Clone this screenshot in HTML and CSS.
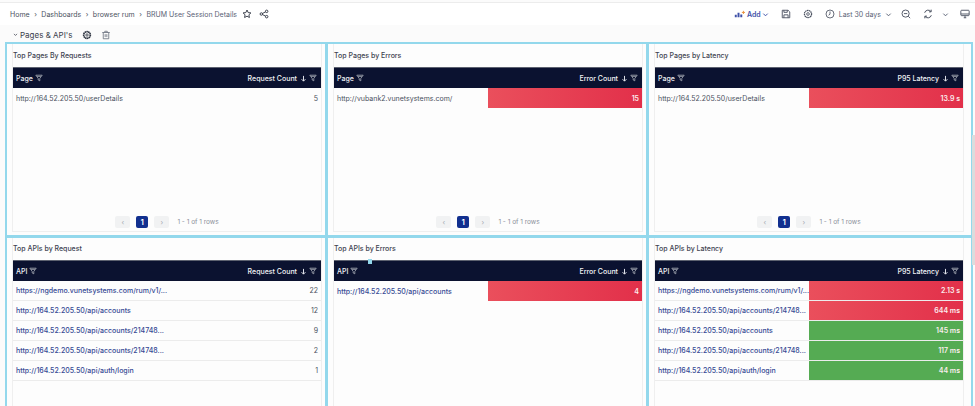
FILE: index.html
```html
<!DOCTYPE html>
<html lang="en">
<head>
<meta charset="utf-8">
<title>BRUM User Session Details</title>
<link rel="stylesheet" href="styles.css">
</head>
<body>
<svg class="defs" width="0" height="0" aria-hidden="true">
  <symbol id="filter" viewBox="0 0 10 10"><path d="M1 1.500h8L6 5.500v3L4 7.500v-2z M2.600 3h4.800" fill="none" stroke="currentColor" stroke-width="1"/></symbol>
  <symbol id="down" viewBox="0 0 8 8"><path d="M4 1v6M1.800 4.800 4 7l2.200-2.200" fill="none" stroke="currentColor" stroke-width="1.100"/></symbol>
  <symbol id="chev" viewBox="0 0 8 8"><path d="M1.500 3 4 5.500 6.500 3" fill="none" stroke="currentColor" stroke-width="1.100"/></symbol>
</svg>
<header class="topbar">
  <nav class="crumbs">
    <span>Home</span><i>›</i><span>Dashboards</span><i>›</i><span>browser rum</span><i>›</i><span class="current">BRUM User Session Details</span>
    <svg class="ico star" viewBox="0 0 12 12"><path d="M6 1.200 7.400 4.300l3.300.4-2.400 2.200.6 3.300L6 8.600 3.100 10.200l.6-3.300L1.300 4.700l3.300-.4z" fill="none" stroke="#2f3542" stroke-width="1.100"/></svg>
    <svg class="ico share" viewBox="0 0 12 12"><g fill="none" stroke="#2f3542" stroke-width="1.100"><circle cx="2.800" cy="6" r="1.500"/><circle cx="9.200" cy="2.800" r="1.500"/><circle cx="9.200" cy="9.200" r="1.500"/><path d="M4.200 5.300 7.800 3.500M4.200 6.700l3.600 1.800"/></g></svg>
  </nav>
  <div class="tools">
    <span class="add">
      <svg class="addico" viewBox="0 0 14 10"><path d="M1 9V6h2.500v3zM4.500 9V3.500H7V9zM8 9V5.500h2.500V9z" fill="#3f51a8"/><path d="M10 3h4M12 1v4" stroke="#e8903a" stroke-width="1.200"/></svg>
      <b>Add</b><svg class="chev blue"><use href="#chev"/></svg>
    </span>
    <svg class="ico save" viewBox="0 0 12 12"><g fill="none" stroke="#4a5160" stroke-width="1.100"><path d="M1.500 1.500h7l2 2v7h-9z"/><path d="M3.500 1.500v2.500h4V1.500M3.500 10.500V7h5v3.500"/></g></svg>
    <svg class="ico gear" viewBox="0 0 12 12"><g fill="none" stroke="#4a5160"><circle cx="6" cy="6" r="4.300" stroke-width="1.500" stroke-dasharray="1.800 .5"/><circle cx="6" cy="6" r="1.600" stroke-width="1"/></g></svg>
    <span class="time">
      <svg class="ico clock" viewBox="0 0 12 12"><g fill="none" stroke="#4a5160" stroke-width="1"><circle cx="6" cy="6" r="4.800"/><path d="M6 3v3.200L4.300 7.500"/></g></svg>
      <span>Last 30 days</span><svg class="chev"><use href="#chev"/></svg>
    </span>
    <svg class="ico zoomout" viewBox="0 0 12 12"><g fill="none" stroke="#4a5160" stroke-width="1.100"><circle cx="5.500" cy="5.500" r="4.300"/><path d="M3.500 5.500h4M8.700 8.700 11 11"/></g></svg>
    <svg class="ico refresh" viewBox="0 0 12 12"><g fill="none" stroke="#4a5160" stroke-width="1.200"><path d="M2 4.500A4.300 4.300 0 0 1 9.500 3M10 7.500A4.300 4.300 0 0 1 2.500 9"/><path d="M9.800 .8v2.600H7.200M2.200 11.200V8.600h2.600"/></g></svg>
    <svg class="chev sole"><use href="#chev"/></svg>
    <svg class="ico monitor" viewBox="0 0 12 12"><g fill="none" stroke="#4a5160" stroke-width="1.100"><rect x="1" y="1.500" width="10" height="6.500" rx="1"/><path d="M1 6h10M4.500 10.500h3M6 8v2.500"/></g></svg>
  </div>
</header>
<div class="rowbar">
  <svg class="chev dark"><use href="#chev"/></svg>
  <span class="rowtitle">Pages &amp; API's</span>
  <svg class="ico rowgear" viewBox="0 0 12 12"><g fill="none" stroke="#2f3542"><circle cx="6" cy="6" r="4" stroke-width="2" stroke-dasharray="1.800 .4"/><circle cx="6" cy="6" r="1.400" stroke-width="1"/></g></svg>
  <svg class="ico trash" viewBox="0 0 12 12"><g fill="none" stroke="#6b7280" stroke-width="1"><path d="M1.500 3h9M4.500 3V1.500h3V3M2.700 3v7.500h6.600V3M5 5v3.500M7 5v3.500"/></g></svg>
</div>
<main class="grid">
  <section class="panel">
    <div class="inner">
      <h2>Top Pages By Requests</h2>
      <div class="thead"><span>Page</span><svg class="filter"><use href="#filter"/></svg><span class="hright">Request Count</span><svg class="sort"><use href="#down"/></svg><svg class="filter"><use href="#filter"/></svg></div>
      <div class="row plain"><span class="cell">http://164.52.205.50/userDetails</span><span class="num">5</span></div>
      <div class="pager"><span class="pg">‹</span><span class="pg on">1</span><span class="pg">›</span><span class="count">1 - 1 of 1 rows</span></div>
    </div>
  </section>
  <section class="panel">
    <div class="inner">
      <h2>Top Pages by Errors</h2>
      <div class="thead"><span>Page</span><svg class="filter"><use href="#filter"/></svg><span class="hright">Error Count</span><svg class="sort"><use href="#down"/></svg><svg class="filter"><use href="#filter"/></svg></div>
      <div class="row plain"><span class="cell">http://vubank2.vunetsystems.com/</span><span class="bar red">15</span></div>
      <div class="pager"><span class="pg">‹</span><span class="pg on">1</span><span class="pg">›</span><span class="count">1 - 1 of 1 rows</span></div>
    </div>
  </section>
  <section class="panel">
    <div class="inner">
      <h2>Top Pages by Latency</h2>
      <div class="thead"><span>Page</span><svg class="filter"><use href="#filter"/></svg><span class="hright">P95 Latency</span><svg class="sort"><use href="#down"/></svg><svg class="filter"><use href="#filter"/></svg></div>
      <div class="row plain"><span class="cell">http://164.52.205.50/userDetails</span><span class="bar red">13.9 s</span></div>
      <div class="pager"><span class="pg">‹</span><span class="pg on">1</span><span class="pg">›</span><span class="count">1 - 1 of 1 rows</span></div>
    </div>
  </section>
  <section class="panel lower">
    <div class="inner">
      <h2>Top APIs by Request</h2>
      <div class="thead"><span>API</span><svg class="filter"><use href="#filter"/></svg><span class="hright">Request Count</span><svg class="sort"><use href="#down"/></svg><svg class="filter"><use href="#filter"/></svg></div>
      <div class="row"><a class="cell">https://ngdemo.vunetsystems.com/rum/v1/...</a><span class="num">22</span></div>
      <div class="row"><a class="cell">http://164.52.205.50/api/accounts</a><span class="num">12</span></div>
      <div class="row"><a class="cell">http://164.52.205.50/api/accounts/214748...</a><span class="num">9</span></div>
      <div class="row"><a class="cell">http://164.52.205.50/api/accounts/214748...</a><span class="num">2</span></div>
      <div class="row"><a class="cell">http://164.52.205.50/api/auth/login</a><span class="num">1</span></div>
    </div>
  </section>
  <section class="panel lower">
    <div class="inner">
      <h2>Top APIs by Errors</h2>
      <div class="thead"><span class="tick"></span><span>API</span><svg class="filter"><use href="#filter"/></svg><span class="hright">Error Count</span><svg class="sort"><use href="#down"/></svg><svg class="filter"><use href="#filter"/></svg></div>
      <div class="row plain"><a class="cell">http://164.52.205.50/api/accounts</a><span class="bar red">4</span></div>
    </div>
  </section>
  <section class="panel lower">
    <div class="inner">
      <h2>Top APIs by Latency</h2>
      <div class="thead"><span>API</span><svg class="filter"><use href="#filter"/></svg><span class="hright">P95 Latency</span><svg class="sort"><use href="#down"/></svg><svg class="filter"><use href="#filter"/></svg></div>
      <div class="row"><a class="cell">https://ngdemo.vunetsystems.com/rum/v1/...</a><span class="bar red">2.13 s</span></div>
      <div class="row"><a class="cell">http://164.52.205.50/api/accounts/214748...</a><span class="bar red">644 ms</span></div>
      <div class="row"><a class="cell">http://164.52.205.50/api/accounts</a><span class="bar green">145 ms</span></div>
      <div class="row"><a class="cell">http://164.52.205.50/api/accounts/214748...</a><span class="bar green">117 ms</span></div>
      <div class="row"><a class="cell">http://164.52.205.50/api/auth/login</a><span class="bar green">44 ms</span></div>
    </div>
  </section>
</main>
<div class="scrollthumb"></div>
</body>
</html>
```

FILE: styles.css
```css
* { box-sizing: border-box; }
html, body { height: 406px; overflow: hidden; }
body {
  margin: 0;
  background: #fbfbfb;
  color: #3d4350;
  font-family: Inter, "Liberation Sans", sans-serif;
  font-size: 7px;
  position: relative;
}
.defs { position: absolute; }
.topbar {
  height: 23px;
  margin-top: 2px;
  border-top: 1px solid #ececec;
  padding: 0 5px 0 10px;
  background: #fff;
  display: flex;
  align-items: center;
  justify-content: space-between;
}
.crumbs { display: flex; align-items: center; color: #4a5160; }
.crumbs i { font-style: normal; margin: 0 4.500px; color: #4a5160; }
.crumbs .current { color: #5a6275; }
.ico { width: 10px; height: 10px; flex: none; }
.star { margin-left: 5px; }
.share { margin-left: 7px; }
.tools { display: flex; align-items: center; color: #5a6275; }
.add { display: flex; align-items: center; color: #3f51a8; }
.add b { font-weight: 600; margin-left: 2px; }
.addico { width: 11px; height: 8px; }
.chev { width: 7px; height: 7px; color: #5a6275; flex: none; }
.chev.blue { color: #3f51a8; margin-left: 1px; }
.chev.dark { color: #2f3542; width: 5px; height: 5px; margin-right: 2px; }
.save { margin-left: 12px; }
.gear { margin-left: 12px; }
.time { display: flex; align-items: center; margin-left: 12px; }
.time span { margin: 0 4px 0 4px; }
.zoomout { margin-left: 9px; }
.refresh { margin-left: 12px; }
.sole { margin-left: 9px; }
.monitor { margin-left: 11px; }
.rowbar {
  height: 17px;
  padding: 2px 0 0 13px;
  display: flex;
  align-items: center;
}
.rowtitle { font-size: 8px; color: #3a404c; }
.rowgear { margin-left: 10px; }
.trash { margin-left: 9px; }
.grid {
  margin-left: 5px;
  display: grid;
  grid-template-columns: 321px 321px 325px;
  grid-template-rows: 194px 200px;
}
.panel {
  border: 2px solid #93d8ec;
  background: #fdfdfd;
  padding: 0 0 3px 5px;
  margin-right: -1px;
  margin-bottom: -1px;
}
.inner {
  width: 310px;
  height: 100%;
  border: 1px solid #efefef;
  border-top: 0;
  display: flex;
  flex-direction: column;
}
h2 {
  margin: 0;
  height: 23px;
  padding-bottom: 1px;
  font-size: 7px;
  font-weight: 500;
  color: #3d4350;
  display: flex;
  align-items: center;
}
.lower h2 { height: 22px; padding-bottom: 2px; }
.thead {
  height: 21px;
  background: #0b1230;
  border-top: 1px solid #5d6270;
  color: #f2f3f6;
  font-weight: 500;
  display: flex;
  align-items: center;
  padding: 0 4px 0 3px;
  position: relative;
  flex: none;
}
.hright { margin-left: auto; }
.filter { width: 8px; height: 8px; margin-left: 2px; color: #a9adb8; flex: none; }
.sort { width: 7px; height: 7px; margin-left: 3px; color: #e6e8ee; flex: none; }
.tick {
  position: absolute;
  left: 34px;
  top: -2px;
  width: 4px;
  height: 5px;
  background: #93d8ec;
}
.row {
  height: 20px;
  display: flex;
  align-items: stretch;
  border-bottom: 1px solid #ececec;
  flex: none;
}
.row.plain { border-bottom: 0; }
.cell {
  flex: 1;
  min-width: 0;
  padding: 0 3px;
  display: flex;
  align-items: center;
  white-space: nowrap;
}
span.cell { color: #4a5160; }
a.cell { color: #364a94; font-weight: 500; }
.num { padding-right: 3px; display: flex; align-items: center; color: #4a5160; }
.bar {
  width: 154px;
  flex: none;
  display: flex;
  align-items: center;
  justify-content: flex-end;
  padding-right: 3px;
  color: #fbeeee;
  font-weight: 600;
}
.red { background: linear-gradient(90deg, #ea4f5c, #e2304a); }
.green { background: #55ab53; }
.pager {
  margin-top: auto;
  height: 16px;
  margin-bottom: 1px;
  display: flex;
  align-items: center;
  justify-content: center;
  gap: 6px;
  color: #8a8f9a;
}
.pg {
  width: 15px;
  height: 12px;
  background: #f1f2f3;
  border-radius: 2px;
  display: flex;
  align-items: center;
  justify-content: center;
  color: #a5a9b1;
}
.pg.on { width: 12px; background: #12308f; color: #fff; font-weight: 700; }
.count { margin-left: 2px; font-size: 6.500px; }
.scrollthumb {
  position: absolute;
  right: 0;
  top: 135px;
  width: 3px;
  height: 130px;
  background: #dcdcdc;
}
```
